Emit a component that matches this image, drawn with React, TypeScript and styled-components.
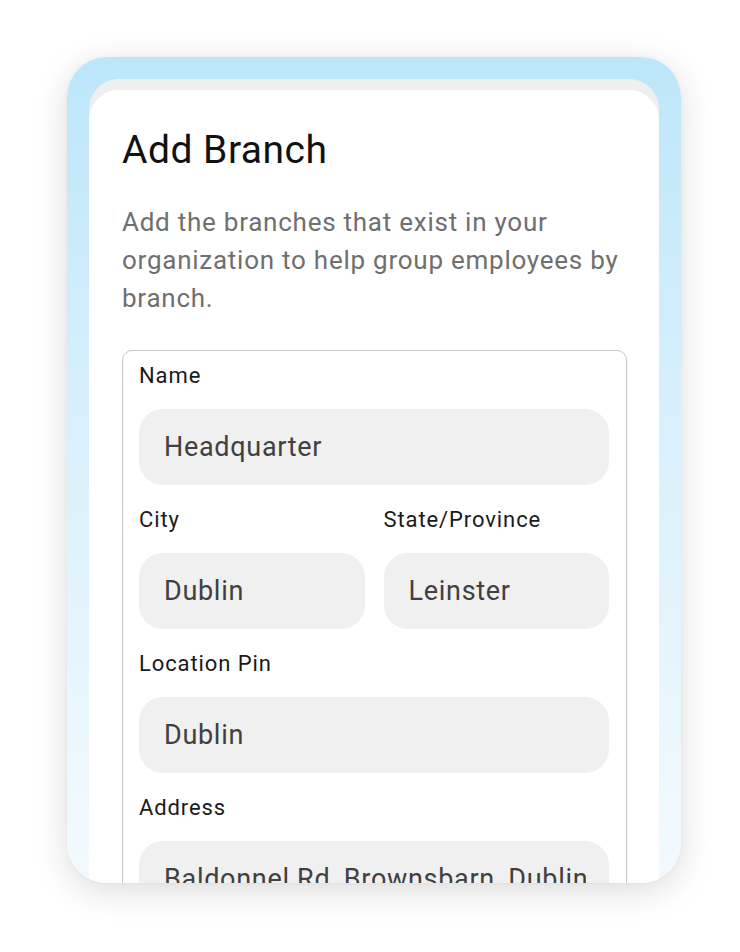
import React from "react";
import styled, { createGlobalStyle } from "styled-components";

const GlobalStyle = createGlobalStyle`
  html, body {
    margin: 0;
    padding: 0;
    background: #ffffff;
  }
  body {
    font-family: Roboto, "Liberation Sans", Arial, sans-serif;
  }
`;

const Page = styled.div`
  width: 740px;
  height: 952px;
  padding: 57px 59px 0 67px;
  box-sizing: border-box;
  overflow: hidden;
`;

const Frame = styled.div`
  width: 614px;
  height: 826px;
  border-radius: 40px;
  background: linear-gradient(180deg, #bde6fa 0%, #d9f0fc 45%, #f3fafe 100%);
  box-shadow: 0 8px 34px rgba(0, 0, 0, 0.14), 0 0 4px rgba(0, 0, 0, 0.04);
  padding: 33px 22px 0 22px;
  box-sizing: border-box;
  overflow: hidden;
`;

const Card = styled.div`
  background: #ffffff;
  border-radius: 30px 30px 0 0;
  box-shadow: 0 -11px 0 0 #efefef;
  padding: 37px 32px 0 33px;
  height: 100%;
  box-sizing: border-box;
`;

const Title = styled.h1`
  margin: 0;
  font-size: 39px;
  line-height: 46px;
  font-weight: 400;
  color: #111111;
  letter-spacing: 0.5px;
`;

const Description = styled.p`
  margin: 30px 0 0 0;
  font-size: 26px;
  line-height: 38px;
  font-weight: 400;
  color: #6f6f6f;
  letter-spacing: 0.75px;
`;

const FormBox = styled.div`
  margin-top: 33px;
  border: 1px solid #c6c6c6;
  border-radius: 10px;
  padding: 13px 17px 0 16px;
`;

const Row = styled.div`
  display: grid;
  grid-template-columns: 1fr 1fr;
  column-gap: 19px;
`;

const Field = styled.div`
  display: flex;
  flex-direction: column;
  margin-bottom: 23px;
`;

const Label = styled.label`
  font-size: 22px;
  line-height: 24px;
  color: #1a1a1a;
  letter-spacing: 0.9px;
  margin-bottom: 21px;
`;

const Input = styled.div`
  height: 76px;
  border-radius: 24px;
  background: #f0f0f0;
  display: flex;
  align-items: center;
  padding: 0 23px 0 25px;
  font-size: 27px;
  color: #404040;
  letter-spacing: 0.7px;
`;

const Value = styled.span`
  flex: 1;
  min-width: 0;
  white-space: nowrap;
  overflow: hidden;
`;

const App: React.FC = () => {
  return (
    <Page>
      <GlobalStyle />
      <Frame>
        <Card>
          <Title>Add Branch</Title>
          <Description>
            Add the branches that exist in your organization to help group
            employees by branch.
          </Description>
          <FormBox>
            <Field>
              <Label>Name</Label>
              <Input>
                <Value>Headquarter</Value>
              </Input>
            </Field>
            <Row>
              <Field>
                <Label>City</Label>
                <Input>
                  <Value>Dublin</Value>
                </Input>
              </Field>
              <Field>
                <Label>State/Province</Label>
                <Input>
                  <Value>Leinster</Value>
                </Input>
              </Field>
            </Row>
            <Field>
              <Label>Location Pin</Label>
              <Input>
                <Value>Dublin</Value>
              </Input>
            </Field>
            <Field>
              <Label>Address</Label>
              <Input>
                <Value>Baldonnel Rd, Brownsbarn, Dublin</Value>
              </Input>
            </Field>
          </FormBox>
        </Card>
      </Frame>
    </Page>
  );
};

export default App;
